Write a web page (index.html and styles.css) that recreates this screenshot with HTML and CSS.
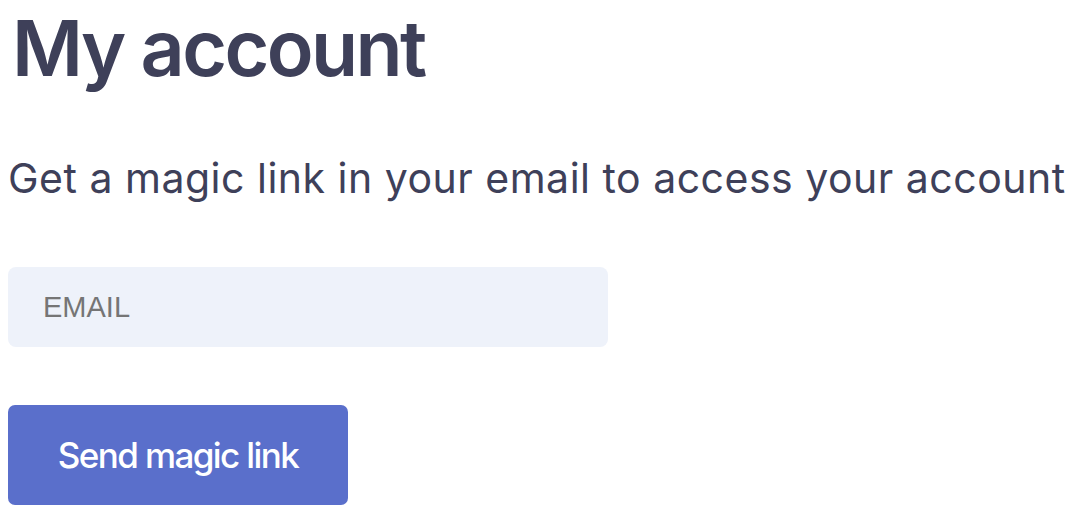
FILE: index.html
```html
<!DOCTYPE html>
<html>
<head>
<meta charset="utf-8">
<link rel="stylesheet" href="styles.css">
</head>
<body>
<main class="account">
  <h1 class="title">My account</h1>
  <p class="lead">Get a magic link in your email to access your account</p>
  <form class="form">
    <input class="email" type="email" placeholder="EMAIL">
    <button class="send" type="button">Send magic link</button>
  </form>
</main>
</body>
</html>
```
FILE: styles.css
```css
html, body {
  margin: 0;
  padding: 0;
  background: #ffffff;
}
.account {
  padding: 0 8px;
  display: flex;
  flex-direction: column;
  align-items: flex-start;
  font-family: Inter, "Liberation Sans", sans-serif;
  color: #3e4059;
}
.title {
  margin: 0;
  padding-left: 4px;
  font-size: 77px;
  font-weight: 600;
  line-height: 96px;
  letter-spacing: -2.6px;
}
.lead {
  margin: 54px 0 0;
  font-size: 41px;
  font-weight: 400;
  line-height: 56px;
  letter-spacing: 0.5px;
}
.form {
  margin: 61px 0 0;
  display: flex;
  flex-direction: column;
  align-items: flex-start;
  gap: 58px;
}
.email {
  box-sizing: border-box;
  width: 600px;
  height: 80px;
  border: none;
  border-radius: 8px;
  background: #eef2fa;
  padding: 0 35px;
  font-family: "Liberation Sans", Arial, sans-serif;
  font-size: 29px;
  color: #3e4059;
  outline: none;
}
.email::placeholder {
  color: #757575;
}
.send {
  box-sizing: border-box;
  width: 340px;
  height: 100px;
  border: none;
  border-radius: 7px;
  background: #5a6fcb;
  color: #ffffff;
  font-family: Inter, "Liberation Sans", sans-serif;
  font-size: 35px;
  font-weight: 500;
  letter-spacing: -1.6px;
  padding: 0;
  cursor: pointer;
}
```
